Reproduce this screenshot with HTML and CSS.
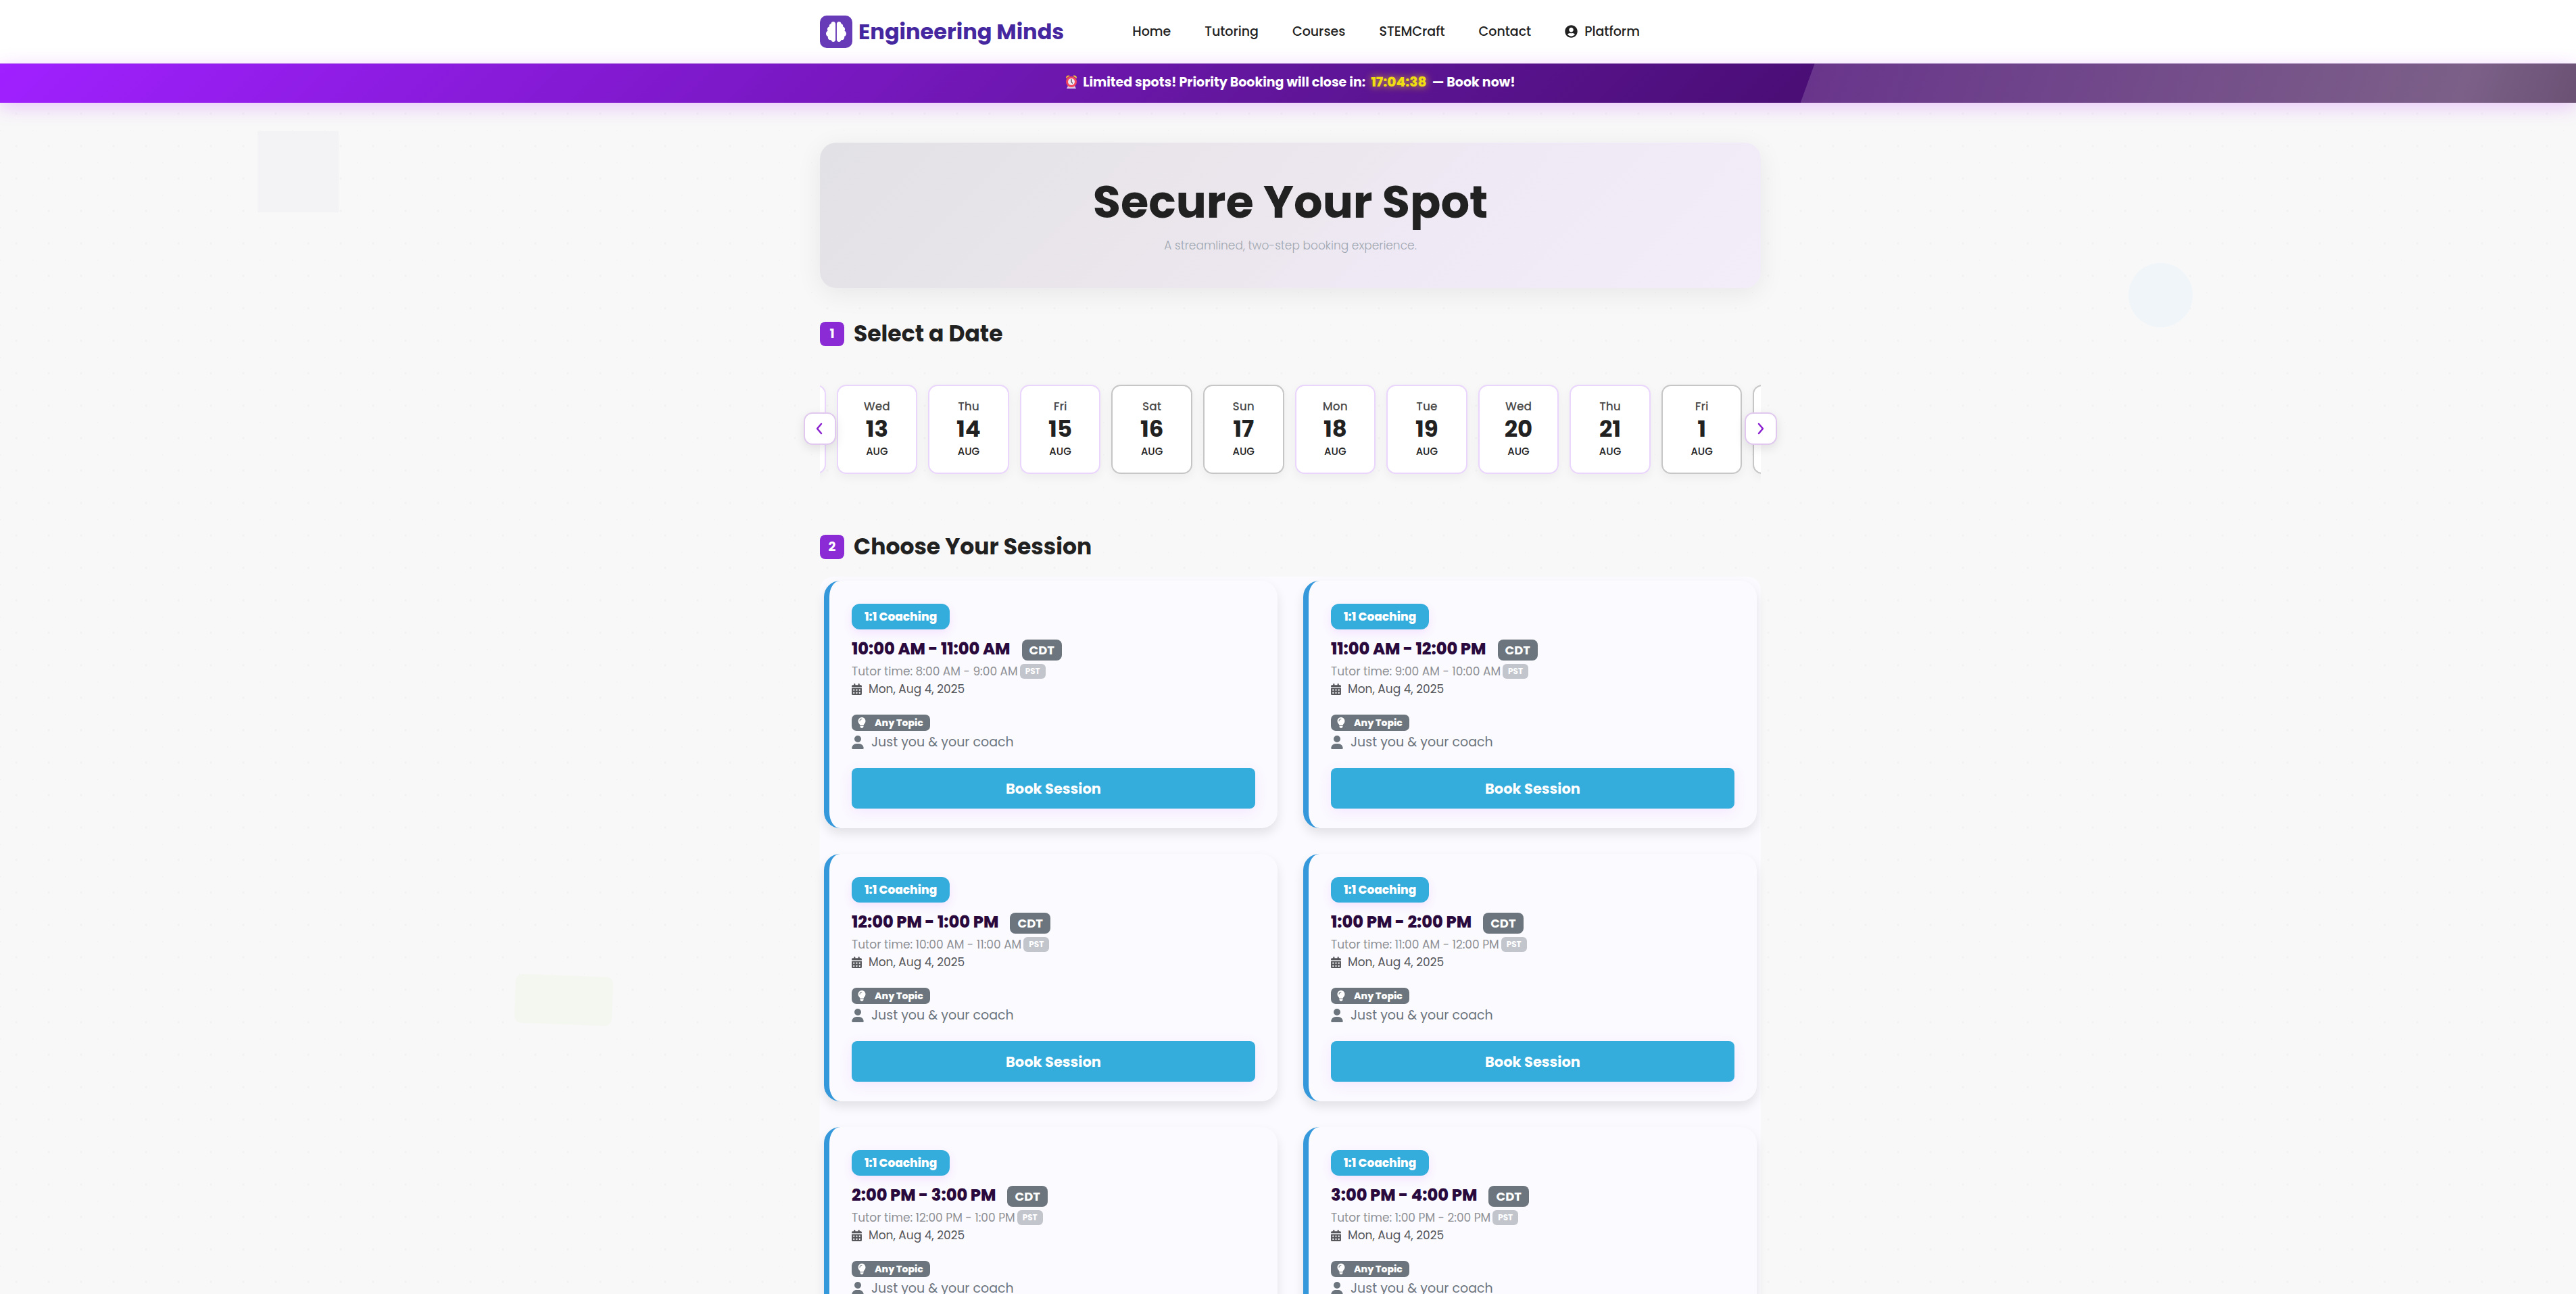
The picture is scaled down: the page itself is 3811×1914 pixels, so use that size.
FILE: index.html
```html
<!DOCTYPE html>
<html lang="en">
<head>
<meta charset="utf-8">
<meta name="viewport" content="width=device-width, initial-scale=1">
<title>Secure Your Spot | Engineering Minds</title>
<link rel="stylesheet" href="styles.css">
</head>
<body>
<svg class="sprite" aria-hidden="true">
  <symbol id="brain" viewBox="0 0 512 512"><path d="M184 0c30.9 0 56 25.1 56 56V456c0 30.9-25.1 56-56 56c-28.9 0-52.7-21.9-55.7-50.1c-5.2 1.4-10.7 2.1-16.3 2.1c-35.3 0-64-28.7-64-64c0-7.4 1.3-14.6 3.6-21.2C21.4 367.4 0 338.2 0 304c0-31.9 18.7-59.5 45.8-72.3C37.1 220.8 32 207 32 192c0-30.7 21.6-56.3 50.4-62.6C80.8 123.9 80 118 80 112c0-29.9 20.6-55.1 48.3-62.1C131.3 21.9 155.1 0 184 0zM328 0c28.9 0 52.6 21.9 55.7 49.9c27.8 7 48.3 32.1 48.3 62.1c0 6-.8 11.9-2.4 17.4c28.8 6.2 50.4 31.9 50.4 62.6c0 15-5.1 28.8-13.8 39.7C493.3 244.5 512 272.1 512 304c0 34.2-21.4 63.4-51.6 74.8c2.3 6.6 3.6 13.8 3.6 21.2c0 35.3-28.7 64-64 64c-5.6 0-11.1-.7-16.3-2.1c-3 28.2-26.8 50.1-55.7 50.1c-30.9 0-56-25.1-56-56V56c0-30.9 25.1-56 56-56z"/></symbol>
  <symbol id="account" viewBox="0 0 496 512"><path d="M248 8C111 8 0 119 0 256s111 248 248 248 248-111 248-248S385 8 248 8zm0 96c48.600 0 88 39.400 88 88s-39.400 88-88 88-88-39.400-88-88 39.400-88 88-88zm0 344c-58.700 0-111.300-26.600-146.500-68.200 18.800-35.400 55.600-59.800 98.500-59.800 2.400 0 4.800.4 7.100 1.100 13 4.200 26.600 6.900 40.900 6.900 14.300 0 28-2.700 40.900-6.900 2.300-.7 4.700-1.100 7.100-1.100 42.900 0 79.700 24.400 98.500 59.800C359.300 421.400 306.700 448 248 448z"/></symbol>
  <symbol id="calendar" viewBox="0 0 448 512"><path d="M128 0c17.700 0 32 14.300 32 32V64H288V32c0-17.700 14.300-32 32-32s32 14.300 32 32V64h48c26.500 0 48 21.500 48 48v48H0V112C0 85.500 21.500 64 48 64H96V32c0-17.700 14.300-32 32-32zM0 192H448V464c0 26.500-21.500 48-48 48H48c-26.500 0-48-21.500-48-48V192zm64 80v32c0 8.800 7.200 16 16 16h32c8.800 0 16-7.200 16-16V272c0-8.800-7.200-16-16-16H80c-8.800 0-16 7.200-16 16zm128 0v32c0 8.800 7.200 16 16 16h32c8.800 0 16-7.200 16-16V272c0-8.800-7.200-16-16-16H208c-8.800 0-16 7.200-16 16zm144-16c-8.800 0-16 7.200-16 16v32c0 8.800 7.200 16 16 16h32c8.800 0 16-7.200 16-16V272c0-8.800-7.200-16-16-16H336zM64 400v32c0 8.800 7.200 16 16 16h32c8.800 0 16-7.200 16-16V400c0-8.800-7.200-16-16-16H80c-8.800 0-16 7.200-16 16zm144-16c-8.800 0-16 7.200-16 16v32c0 8.800 7.200 16 16 16h32c8.800 0 16-7.200 16-16V400c0-8.800-7.200-16-16-16H208zm112 16v32c0 8.800 7.200 16 16 16h32c8.800 0 16-7.200 16-16V400c0-8.800-7.200-16-16-16H336c-8.800 0-16 7.200-16 16z"/></symbol>
  <symbol id="bulb" viewBox="0 0 384 512"><path d="M272 384c9.600-31.900 29.500-59.100 49.200-86.200l0 0c5.200-7.100 10.400-14.200 15.400-21.400c19.800-28.500 31.400-63 31.400-100.300C368 78.800 289.200 0 192 0S16 78.800 16 176c0 37.300 11.600 71.900 31.400 100.300c5 7.200 10.200 14.300 15.400 21.400l0 0c19.800 27.100 39.700 54.400 49.200 86.200H272zM192 512c44.200 0 80-35.800 80-80V416H112v16c0 44.200 35.800 80 80 80zM112 176c0 8.800-7.200 16-16 16s-16-7.200-16-16c0-61.900 50.100-112 112-112c8.800 0 16 7.200 16 16s-7.200 16-16 16c-44.200 0-80 35.800-80 80z"/></symbol>
  <symbol id="person" viewBox="0 0 448 512"><path d="M224 256A128 128 0 1 0 224 0a128 128 0 1 0 0 256zm-45.700 48C79.800 304 0 383.800 0 482.300C0 498.700 13.300 512 29.700 512H418.300c16.400 0 29.700-13.300 29.700-29.700C448 383.800 368.200 304 269.700 304H178.300z"/></symbol>
  <symbol id="alarm" viewBox="0 0 18 20"><path d="M1 5a4 4 0 0 1 6-4z" fill="#f9b52b"/><path d="M17 5a4 4 0 0 0-6-4z" fill="#fbd03c"/><path d="M2 20l2-4h10l2 4z" fill="#d9c7e8"/><circle cx="9" cy="10" r="8" fill="#f2475f"/><circle cx="9" cy="10" r="5" fill="#efe6f3"/><path d="M9 6.500V10l1.500 2" fill="none" stroke="#3b3346" stroke-width="1.200" stroke-linecap="round"/></symbol>
  <symbol id="chevron-left" viewBox="0 0 12 18"><path d="M8 2L2 9l6 7" fill="none" stroke="currentColor" stroke-width="2.500" stroke-linecap="round" stroke-linejoin="round"/></symbol>
  <symbol id="chevron-right" viewBox="0 0 12 18"><path d="M3 2l6 7-6 7" fill="none" stroke="currentColor" stroke-width="2.500" stroke-linecap="round" stroke-linejoin="round"/></symbol>
</svg>

<div class="page">
  <span class="shape shape-square"></span>
  <span class="shape shape-circle"></span>
  <span class="shape shape-bar"></span>

  <header class="site-header">
    <div class="container header-row">
      <a class="brand" href="#"><span class="brand-mark"><svg class="icon-brain"><use href="#brain"/></svg></span>Engineering Minds</a>
      <nav class="nav">
        <a href="#">Home</a>
        <a href="#">Tutoring</a>
        <a href="#">Courses</a>
        <a href="#">STEMCraft</a>
        <a href="#">Contact</a>
        <a class="nav-account" href="#"><svg class="icon-account"><use href="#account"/></svg>Platform</a>
      </nav>
    </div>
  </header>

  <div class="banner">
    <svg class="icon-alarm"><use href="#alarm"/></svg>
    <span>Limited spots! Priority Booking will close in:</span>
    <span class="countdown">17:04:38</span>
    <span>— Book now!</span>
  </div>

  <main class="container">
    <section class="hero">
      <h1>Secure Your Spot</h1>
      <p>A streamlined, two-step booking experience.</p>
    </section>

    <h2 class="step"><span class="step-number">1</span>Select a Date</h2>
    <div class="dates">
      <div class="dates-window">
        <div class="dates-track">
          <button class="date" aria-label="Earlier date"></button>
          <button class="date"><span class="day">Wed</span><span class="number">13</span><span class="month">AUG</span></button>
          <button class="date"><span class="day">Thu</span><span class="number">14</span><span class="month">AUG</span></button>
          <button class="date"><span class="day">Fri</span><span class="number">15</span><span class="month">AUG</span></button>
          <button class="date muted"><span class="day">Sat</span><span class="number">16</span><span class="month">AUG</span></button>
          <button class="date muted"><span class="day">Sun</span><span class="number">17</span><span class="month">AUG</span></button>
          <button class="date"><span class="day">Mon</span><span class="number">18</span><span class="month">AUG</span></button>
          <button class="date"><span class="day">Tue</span><span class="number">19</span><span class="month">AUG</span></button>
          <button class="date"><span class="day">Wed</span><span class="number">20</span><span class="month">AUG</span></button>
          <button class="date"><span class="day">Thu</span><span class="number">21</span><span class="month">AUG</span></button>
          <button class="date muted"><span class="day">Fri</span><span class="number">1</span><span class="month">AUG</span></button>
          <button class="date muted" aria-label="Later date"></button>
        </div>
      </div>
      <button class="arrow arrow-prev" aria-label="Previous dates"><svg class="icon-chevron"><use href="#chevron-left"/></svg></button>
      <button class="arrow arrow-next" aria-label="Next dates"><svg class="icon-chevron"><use href="#chevron-right"/></svg></button>
    </div>

    <h2 class="step step-sessions"><span class="step-number">2</span>Choose Your Session</h2>
    <div class="sessions">
      <article class="session">
        <span class="kind">1:1 Coaching</span>
        <h3 class="time">10:00 AM - 11:00 AM <span class="zone">CDT</span></h3>
        <p class="tutor">Tutor time: 8:00 AM - 9:00 AM <span class="zone-small">PST</span></p>
        <p class="day-line"><svg class="icon-calendar"><use href="#calendar"/></svg>Mon, Aug 4, 2025</p>
        <span class="topic"><svg class="icon-bulb"><use href="#bulb"/></svg>Any Topic</span>
        <p class="people"><svg class="icon-person"><use href="#person"/></svg>Just you &amp; your coach</p>
        <button class="book">Book Session</button>
      </article>
      <article class="session">
        <span class="kind">1:1 Coaching</span>
        <h3 class="time">11:00 AM - 12:00 PM <span class="zone">CDT</span></h3>
        <p class="tutor">Tutor time: 9:00 AM - 10:00 AM <span class="zone-small">PST</span></p>
        <p class="day-line"><svg class="icon-calendar"><use href="#calendar"/></svg>Mon, Aug 4, 2025</p>
        <span class="topic"><svg class="icon-bulb"><use href="#bulb"/></svg>Any Topic</span>
        <p class="people"><svg class="icon-person"><use href="#person"/></svg>Just you &amp; your coach</p>
        <button class="book">Book Session</button>
      </article>
      <article class="session">
        <span class="kind">1:1 Coaching</span>
        <h3 class="time">12:00 PM - 1:00 PM <span class="zone">CDT</span></h3>
        <p class="tutor">Tutor time: 10:00 AM - 11:00 AM <span class="zone-small">PST</span></p>
        <p class="day-line"><svg class="icon-calendar"><use href="#calendar"/></svg>Mon, Aug 4, 2025</p>
        <span class="topic"><svg class="icon-bulb"><use href="#bulb"/></svg>Any Topic</span>
        <p class="people"><svg class="icon-person"><use href="#person"/></svg>Just you &amp; your coach</p>
        <button class="book">Book Session</button>
      </article>
      <article class="session">
        <span class="kind">1:1 Coaching</span>
        <h3 class="time">1:00 PM - 2:00 PM <span class="zone">CDT</span></h3>
        <p class="tutor">Tutor time: 11:00 AM - 12:00 PM <span class="zone-small">PST</span></p>
        <p class="day-line"><svg class="icon-calendar"><use href="#calendar"/></svg>Mon, Aug 4, 2025</p>
        <span class="topic"><svg class="icon-bulb"><use href="#bulb"/></svg>Any Topic</span>
        <p class="people"><svg class="icon-person"><use href="#person"/></svg>Just you &amp; your coach</p>
        <button class="book">Book Session</button>
      </article>
      <article class="session">
        <span class="kind">1:1 Coaching</span>
        <h3 class="time">2:00 PM - 3:00 PM <span class="zone">CDT</span></h3>
        <p class="tutor">Tutor time: 12:00 PM - 1:00 PM <span class="zone-small">PST</span></p>
        <p class="day-line"><svg class="icon-calendar"><use href="#calendar"/></svg>Mon, Aug 4, 2025</p>
        <span class="topic"><svg class="icon-bulb"><use href="#bulb"/></svg>Any Topic</span>
        <p class="people"><svg class="icon-person"><use href="#person"/></svg>Just you &amp; your coach</p>
        <button class="book">Book Session</button>
      </article>
      <article class="session">
        <span class="kind">1:1 Coaching</span>
        <h3 class="time">3:00 PM - 4:00 PM <span class="zone">CDT</span></h3>
        <p class="tutor">Tutor time: 1:00 PM - 2:00 PM <span class="zone-small">PST</span></p>
        <p class="day-line"><svg class="icon-calendar"><use href="#calendar"/></svg>Mon, Aug 4, 2025</p>
        <span class="topic"><svg class="icon-bulb"><use href="#bulb"/></svg>Any Topic</span>
        <p class="people"><svg class="icon-person"><use href="#person"/></svg>Just you &amp; your coach</p>
        <button class="book">Book Session</button>
      </article>
    </div>
  </main>
</div>
</body>
</html>
```
FILE: styles.css
```css
* { box-sizing: border-box; }

body {
  margin: 0;
  font-family: Poppins, Inter, "Open Sans", sans-serif;
  color: #212121;
}

h1, h2, h3, p { margin: 0; }
a { color: inherit; text-decoration: none; }
button { font-family: inherit; padding: 0; cursor: pointer; }
svg { fill: currentColor; flex: none; }
.sprite { position: absolute; width: 0; height: 0; }

.page {
  position: relative;
  height: 100vh;
  overflow: hidden;
  background:
    radial-gradient(circle at 0 0, #f2f2f3 1px, transparent 2px) 0 0 / 48px 48px,
    radial-gradient(circle at 24px 24px, #f2f2f3 1px, transparent 2px) 0 0 / 48px 48px,
    #f8f8f8;
}

.container {
  position: relative;
  max-width: 1399px;
  margin: 0 auto;
  padding-left: 7px;
}

/* Background shapes */
.shape { position: absolute; }
.shape-square { left: 10%; top: 194px; width: 120px; height: 120px; background: #f3f3f6; }
.shape-circle { right: calc(15% - 5px); top: 389px; width: 95px; height: 95px; border-radius: 50%; background: #f0f5f9; }
.shape-bar { left: 20%; top: 1443px; width: 144px; height: 72px; border-radius: 10px; background: #f4f7ef; transform: rotate(2deg); }

/* Header */
.site-header { position: relative; background: #fff; border-bottom: 1px solid #e8e4ee; }
.header-row { display: flex; align-items: center; height: 93px; }
.brand { display: flex; align-items: center; gap: 9px; font-size: 32px; font-weight: 700; color: #4527a0; white-space: nowrap; }
.brand-mark { display: grid; place-items: center; width: 48px; height: 48px; border-radius: 10px; background: #673ab7; color: #fff; }
.icon-brain { width: 30px; height: 30px; }
.nav { display: flex; gap: 50px; margin-left: 101px; font-size: 19px; font-weight: 500; line-height: 28px; white-space: nowrap; }
.nav-account { display: flex; align-items: center; gap: 10px; }
.icon-account { width: 19px; height: 19px; }

/* Countdown banner */
.banner {
  position: relative;
  display: flex;
  align-items: center;
  justify-content: center;
  gap: 8px;
  height: 58px;
  padding: 0 0 4px 7px;
  font-size: 19px;
  font-weight: 700;
  color: #fff;
  background: linear-gradient(135deg, #a020ff, #7a18c4 31%, #62169c 49%, #4a0e76 70%, #3a0a5c);
  box-shadow: 0 6px 28px rgba(190, 60, 255, 0.28);
}
.banner::after {
  content: "";
  position: absolute;
  inset: 0 0 0 calc(70% - 4px);
  background: linear-gradient(110deg, #68348c, #7c6088 85%, #6b5274);
  clip-path: polygon(21px 0, 100% 0, 100% 100%, 0 100%);
}
.icon-alarm { width: 18px; height: 20px; }
.countdown { color: #f0de12; font-size: 20px; font-weight: 800; text-shadow: 0 0 12px rgba(240, 222, 18, 0.8); }

/* Hero */
.hero {
  margin-top: 59px;
  padding: 48px 24px 50px;
  border-radius: 24px;
  text-align: center;
  background: linear-gradient(135deg, #e2e1e5, #ece7ee 50%, #efe9f6 65%, #f3ecf9);
  box-shadow: 0 8px 38px rgba(0, 0, 0, 0.07);
}
.hero h1 { font-size: 67px; line-height: 80px; font-weight: 700; }
.hero p { margin-top: 11px; font-size: 17px; line-height: 26px; font-weight: 300; color: #a0a7b1; }

/* Step headings */
.step { display: flex; align-items: center; gap: 14px; margin-top: 50px; font-size: 33px; line-height: 36px; font-weight: 700; }
.step-sessions { margin-top: 66px; }
.step-number { display: grid; place-items: center; width: 36px; height: 36px; border-radius: 8px; background: #8a2bd5; color: #fff; font-size: 19px; }

/* Date carousel */
.dates { position: relative; margin-top: 45px; }
.dates-window { overflow: hidden; padding: 12px 0 24px; }
.dates-track { display: grid; grid-template-columns: repeat(12, 1fr); gap: 16px; width: 1611px; margin-left: -111px; }
.date {
  display: flex;
  flex-direction: column;
  align-items: center;
  justify-content: center;
  height: 132px;
  border: 2px solid #ead5fd;
  border-radius: 14px;
  background: #fff;
  color: #212121;
  box-shadow: 0 5px 15px rgba(0, 0, 0, 0.05);
}
.date.muted { border-color: #c6c6c6; }
.day { font-size: 17px; line-height: 26px; font-weight: 500; color: #4a4a4a; }
.number { font-size: 34px; line-height: 40px; font-weight: 700; }
.month { font-size: 15px; line-height: 28px; font-weight: 500; }
.arrow {
  position: absolute;
  top: 53px;
  display: grid;
  place-items: center;
  width: 48px;
  height: 48px;
  border: 2px solid #e0c8ef;
  border-radius: 13px;
  background: #fff;
  color: #8a1fd0;
  box-shadow: 0 5px 15px rgba(0, 0, 0, 0.1);
}
.arrow-prev { left: -24px; }
.arrow-next { right: -24px; }
.icon-chevron { width: 12px; height: 18px; }

/* Session cards */
.sessions {
  display: grid;
  grid-template-columns: 1fr 1fr;
  gap: 38px;
  margin-top: 26px;
  padding: 6px;
  border-radius: 20px;
  background: #fbfaff;
}
.session {
  display: flex;
  flex-direction: column;
  align-items: flex-start;
  padding: 34px 33px 29px;
  border-left: 8px solid #3498db;
  border-radius: 24px;
  background: #fbfaff;
  box-shadow: 0 8px 16px rgba(0, 0, 0, 0.1);
}
.kind {
  padding: 0 19px;
  border-radius: 12px;
  background: #35addc;
  color: #fff;
  font-size: 17px;
  line-height: 38px;
  font-weight: 800;
  box-shadow: 0 5px 14px rgba(190, 60, 255, 0.12);
}
.time { display: flex; align-items: baseline; gap: 17px; margin-top: 15px; font-size: 24px; line-height: 25px; font-weight: 800; color: #2a0a3d; }
.zone { padding: 0 11px; border-radius: 8px; background: #6c757d; color: #fff; font-size: 18px; line-height: 31px; font-weight: 700; }
.tutor { display: flex; align-items: center; gap: 3px; margin-top: 5px; font-size: 17px; line-height: 22px; color: #8d8f94; }
.zone-small { padding: 0 8px; border-radius: 6px; background: #c3c5cd; color: #fff; font-size: 12px; font-weight: 700; }
.day-line { display: flex; align-items: center; gap: 10px; margin-top: 5px; font-size: 17px; line-height: 20px; color: #55565a; }
.icon-calendar { width: 15px; height: 17px; }
.topic { display: flex; align-items: center; gap: 13px; margin-top: 28px; padding: 0 10px 0 9px; border-radius: 7px; background: #6c757d; color: #fff; font-size: 14px; line-height: 24px; font-weight: 800; }
.icon-bulb { width: 12px; height: 16px; }
.people { display: flex; align-items: center; gap: 11px; margin-top: 2px; font-size: 19px; line-height: 30px; color: #6c757d; }
.icon-person { width: 18px; height: 20px; }
.book {
  align-self: stretch;
  height: 60px;
  margin-top: 23px;
  border: 0;
  border-radius: 8px;
  background: #35addc;
  color: #fff;
  font-size: 21px;
  font-weight: 700;
  box-shadow: 0 5px 19px rgba(190, 60, 255, 0.1);
}

@media (max-width: 1000px) {
  .sessions { grid-template-columns: 1fr; }
  .header-row { height: auto; flex-wrap: wrap; }
  .nav { flex-wrap: wrap; margin-left: 0; }
}
```
